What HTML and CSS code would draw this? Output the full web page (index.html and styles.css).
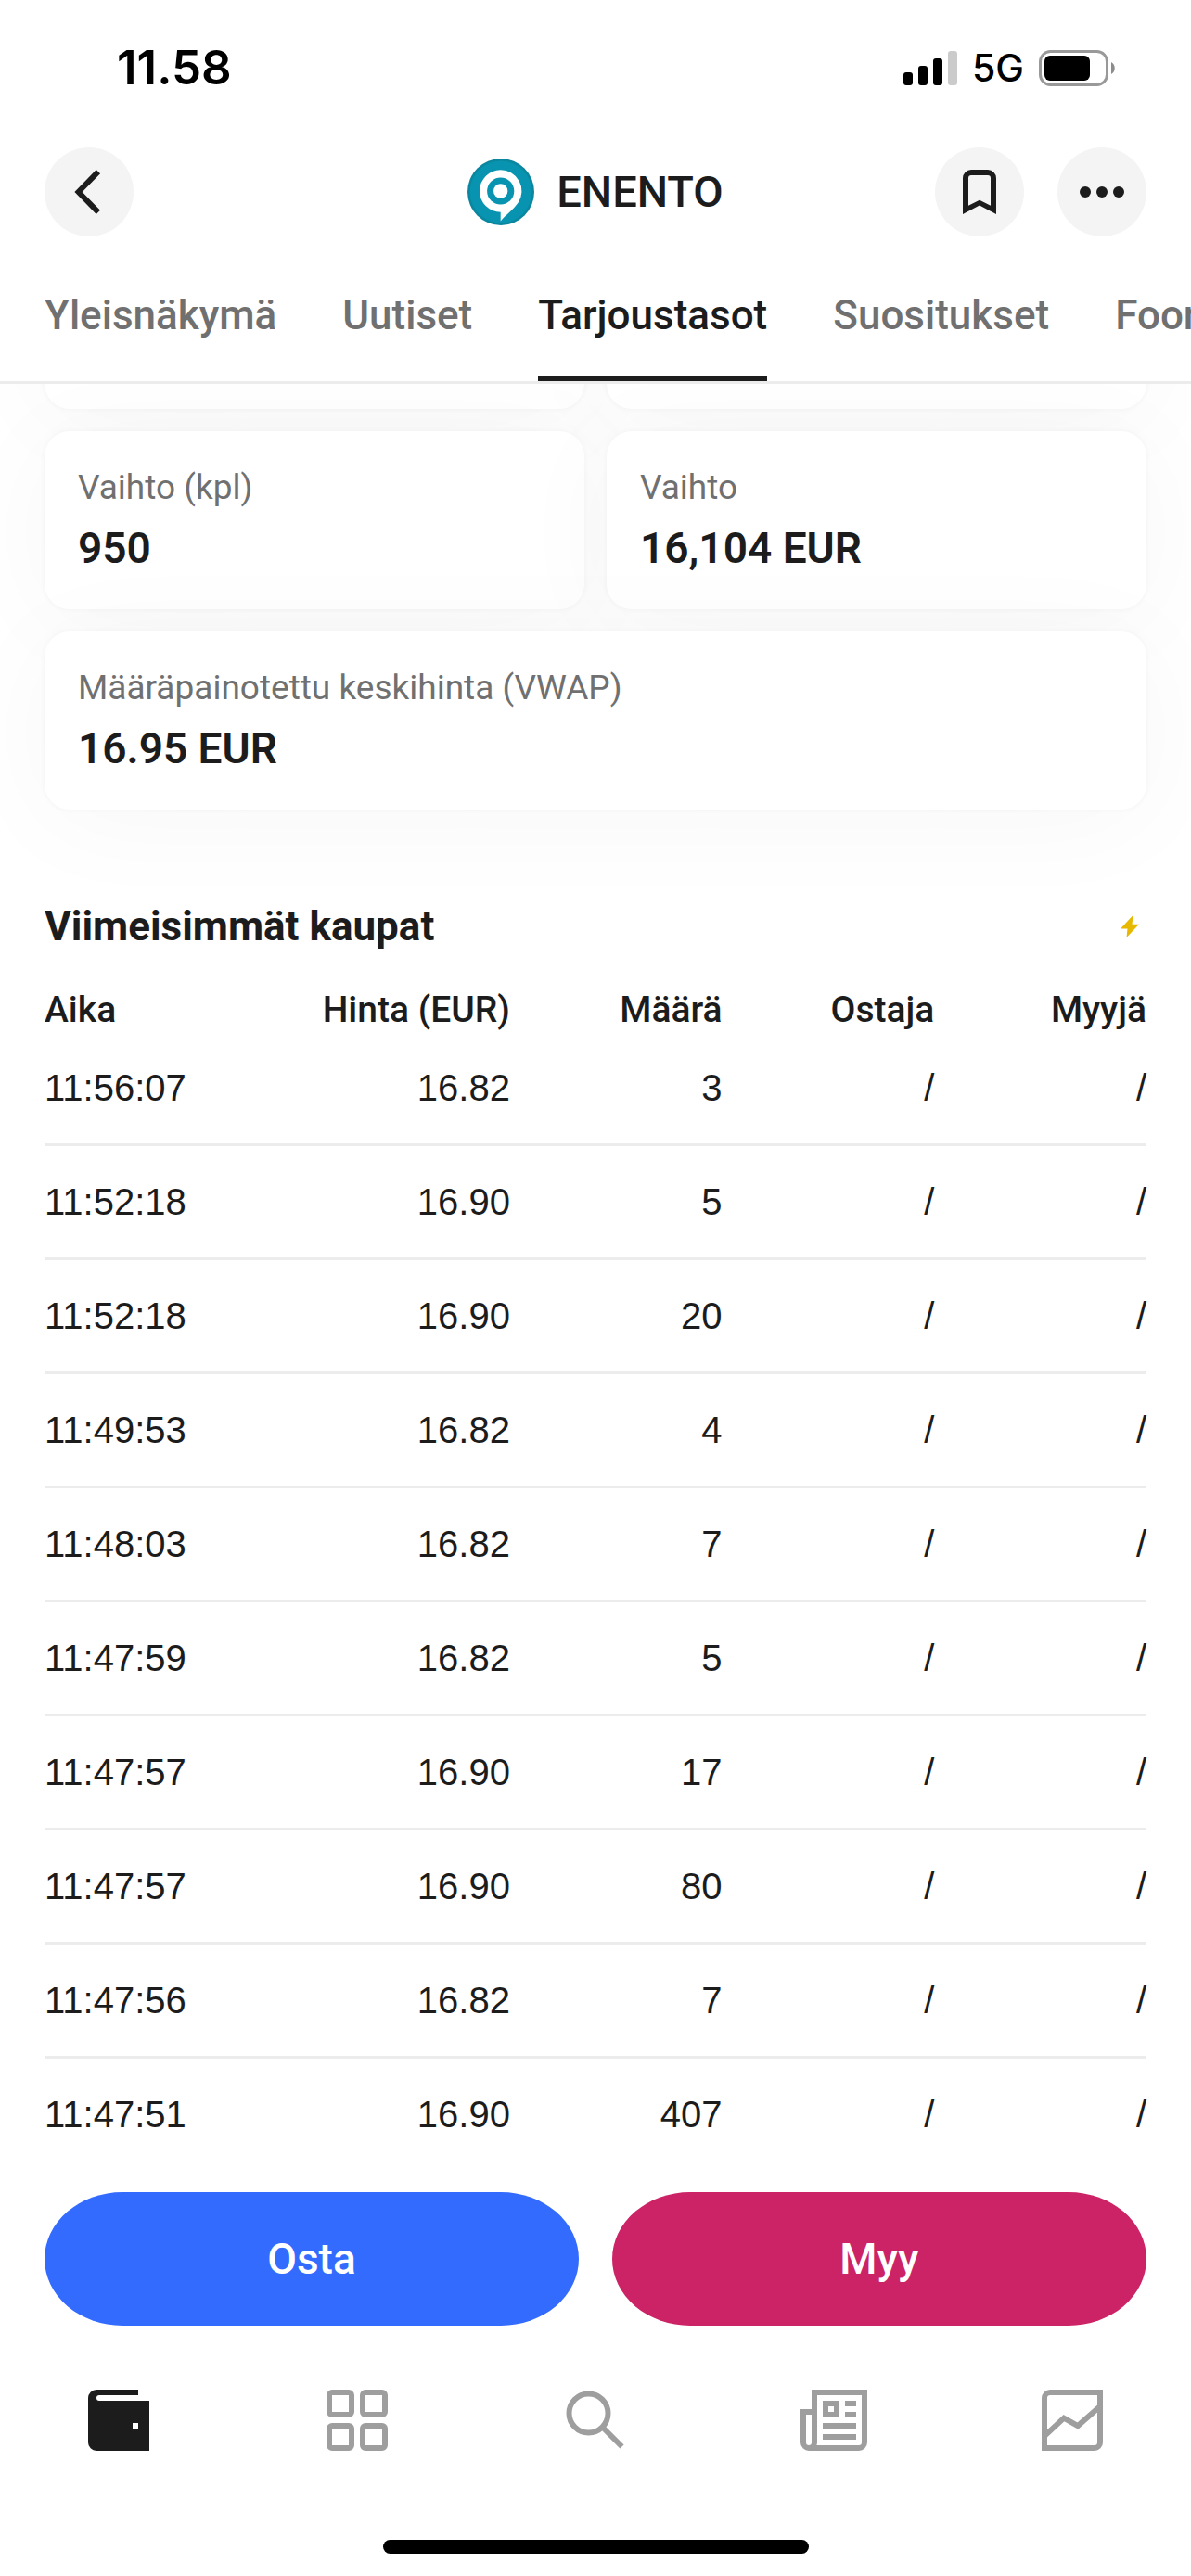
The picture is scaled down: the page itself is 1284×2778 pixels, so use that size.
FILE: index.html
```html
<!DOCTYPE html>
<html lang="fi">
<head>
<meta charset="utf-8">
<meta name="viewport" content="width=device-width, initial-scale=1">
<title>ENENTO</title>
<link rel="stylesheet" href="styles.css">
</head>
<body>
<div class="screen">
  <div class="status-bar">
    <span class="status-time">11.58</span>
    <div class="status-icons">
      <svg class="signal" viewBox="0 0 58 38" aria-hidden="true">
        <rect x="0" y="24" width="10" height="14" rx="3"/>
        <rect x="16" y="17" width="10" height="21" rx="3"/>
        <rect x="32" y="9" width="10" height="29" rx="3"/>
        <rect x="48" y="1" width="10" height="37" rx="3" fill="#cbcbcb"/>
      </svg>
      <span class="network">5G</span>
      <svg class="battery" viewBox="0 0 83 39" aria-hidden="true">
        <rect x="1.5" y="1.5" width="72" height="36" rx="11" fill="none" stroke="#999" stroke-width="3"/>
        <rect x="6" y="6" width="49" height="27" rx="6"/>
        <path d="M78 13c5 2.500 5 10.500 0 13z" fill="#8c8c8c"/>
      </svg>
    </div>
  </div>

  <header class="top-bar">
    <button class="round-button" type="button" aria-label="Takaisin">
      <svg viewBox="0 0 24 24"><path d="M15.300 4.700 8.200 12l7.100 7.300" fill="none" stroke="currentColor" stroke-width="2"/></svg>
    </button>
    <h1 class="company">
      <svg class="company-logo" viewBox="0 0 72 72" aria-hidden="true">
        <circle cx="36" cy="36" r="36" fill="#0a869e"/>
        <circle cx="36" cy="36" r="33.500" fill="#0894b0"/>
        <path fill="#fff" d="M35.700 12.300a22.700 22.700 0 0 1 19 35.200C50 54.500 41 61 35.700 67.500V57.700a22.700 22.700 0 0 1 0-45.400z"/>
        <circle cx="35.700" cy="35" r="14.600" fill="#0894b0"/>
        <circle cx="35.700" cy="35" r="7.700" fill="#fff"/>
      </svg>
      ENENTO
    </h1>
    <div class="top-actions">
      <button class="round-button" type="button" aria-label="Lisää seurantaan">
        <svg viewBox="0 0 24 24"><path fill="currentColor" fill-rule="evenodd" d="M9 4h6a3 3 0 0 1 3 3v13l-6-3.200L6 20V7a3 3 0 0 1 3-3zm0 2a1 1 0 0 0-1 1v9.900l4-2 4 2V7a1 1 0 0 0-1-1z"/></svg>
      </button>
      <button class="round-button" type="button" aria-label="Lisää toimintoja">
        <svg viewBox="0 0 24 24" fill="currentColor"><circle cx="6" cy="12" r="2"/><circle cx="12" cy="12" r="2"/><circle cx="18" cy="12" r="2"/></svg>
      </button>
    </div>
  </header>

  <nav class="tabs">
    <a class="tab" href="#">Yleisnäkymä</a>
    <a class="tab" href="#">Uutiset</a>
    <a class="tab tab-active" href="#" aria-current="page">Tarjoustasot</a>
    <a class="tab" href="#">Suositukset</a>
    <a class="tab" href="#">Foorumi</a>
  </nav>

  <main class="content">
    <div class="stats">
      <div class="stat-card"></div>
      <div class="stat-card"></div>
      <div class="stat-card"><span class="stat-label">Vaihto (kpl)</span><strong class="stat-value">950</strong></div>
      <div class="stat-card"><span class="stat-label">Vaihto</span><strong class="stat-value">16,104 EUR</strong></div>
      <div class="stat-card stat-card-wide"><span class="stat-label">Määräpainotettu keskihinta (VWAP)</span><strong class="stat-value">16.95 EUR</strong></div>
    </div>

    <section class="trades">
      <div class="section-head">
        <h2 class="section-title">Viimeisimmät kaupat</h2>
        <svg class="bolt" viewBox="0 0 36 36" aria-hidden="true"><path fill="#e6b800" d="M21.500 6 8 20.500h7.500L14.500 30 28 15.800h-7.500z"/></svg>
      </div>
      <table class="trade-table">
        <thead>
          <tr><th class="col-time">Aika</th><th>Hinta (EUR)</th><th>Määrä</th><th>Ostaja</th><th>Myyjä</th></tr>
        </thead>
        <tbody>
          <tr><td>11:56:07</td><td>16.82</td><td>3</td><td>/</td><td>/</td></tr>
          <tr><td>11:52:18</td><td>16.90</td><td>5</td><td>/</td><td>/</td></tr>
          <tr><td>11:52:18</td><td>16.90</td><td>20</td><td>/</td><td>/</td></tr>
          <tr><td>11:49:53</td><td>16.82</td><td>4</td><td>/</td><td>/</td></tr>
          <tr><td>11:48:03</td><td>16.82</td><td>7</td><td>/</td><td>/</td></tr>
          <tr><td>11:47:59</td><td>16.82</td><td>5</td><td>/</td><td>/</td></tr>
          <tr><td>11:47:57</td><td>16.90</td><td>17</td><td>/</td><td>/</td></tr>
          <tr><td>11:47:57</td><td>16.90</td><td>80</td><td>/</td><td>/</td></tr>
          <tr><td>11:47:56</td><td>16.82</td><td>7</td><td>/</td><td>/</td></tr>
          <tr><td>11:47:51</td><td>16.90</td><td>407</td><td>/</td><td>/</td></tr>
        </tbody>
      </table>
    </section>
  </main>

  <footer class="bottom">
    <div class="trade-actions">
      <button class="trade-button buy" type="button">Osta</button>
      <button class="trade-button sell" type="button">Myy</button>
    </div>
    <nav class="tab-bar">
      <a class="bar-item bar-item-active" href="#" aria-label="Salkku">
        <svg viewBox="0 0 24 24"><path fill="currentColor" fill-rule="evenodd" d="M4 1h15v2H5a1 1 0 0 0 0 2h18v18H4a3 3 0 0 1-3-3V4a3 3 0 0 1 3-3zm13 12v2h2v-2z"/></svg>
      </a>
      <a class="bar-item" href="#" aria-label="Yleiskatsaus">
        <svg viewBox="0 0 24 24"><path fill="currentColor" fill-rule="evenodd" d="M3 1h6a2 2 0 0 1 2 2v6a2 2 0 0 1-2 2H3a2 2 0 0 1-2-2V3a2 2 0 0 1 2-2zm0 2v6h6V3zM15 1h6a2 2 0 0 1 2 2v6a2 2 0 0 1-2 2h-6a2 2 0 0 1-2-2V3a2 2 0 0 1 2-2zm0 2v6h6V3zM3 13h6a2 2 0 0 1 2 2v6a2 2 0 0 1-2 2H3a2 2 0 0 1-2-2v-6a2 2 0 0 1 2-2zm0 2v6h6v-6zM15 13h6a2 2 0 0 1 2 2v6a2 2 0 0 1-2 2h-6a2 2 0 0 1-2-2v-6a2 2 0 0 1 2-2zm0 2v6h6v-6z"/></svg>
      </a>
      <a class="bar-item" href="#" aria-label="Haku">
        <svg viewBox="0 0 24 24" fill="none" stroke="currentColor" stroke-width="2"><circle cx="9.500" cy="9.500" r="7"/><path d="M14.500 14.500l7 7"/></svg>
      </a>
      <a class="bar-item" href="#" aria-label="Uutiset">
        <svg viewBox="0 0 24 24"><path fill="currentColor" fill-rule="evenodd" d="M4 1h20v19a3 3 0 0 1-3 3H3a3 3 0 0 1-3-3V8h4zm2 2v17a3 3 0 0 1-.2 1H21a1 1 0 0 0 1-1V3zM2 10v10a1 1 0 0 0 2 0V10zM8 5h6v6H8zm2 2v2h2V7zM16 5h4v2h-4zM16 9h4v2h-4zM8 13h12v2H8zM8 17h12v2H8z"/></svg>
      </a>
      <a class="bar-item" href="#" aria-label="Markkinat">
        <svg viewBox="0 0 24 24" fill="none" stroke="currentColor" stroke-width="2"><path d="M2 22V4a2 2 0 0 1 2-2h18v18a2 2 0 0 1-2 2z"/><path d="M2 17.700 9 11.200l5 2.800 8-7"/></svg>
      </a>
    </nav>
    <div class="home-indicator"></div>
  </footer>
</div>
</body>
</html>
```
FILE: styles.css
```css
* {
  box-sizing: border-box;
}

body {
  margin: 0;
  background: #fff;
  color: #1c1c1c;
  font-family: Roboto, "Liberation Sans", sans-serif;
}

a {
  color: inherit;
  text-decoration: none;
}

button {
  border: 0;
  padding: 0;
  color: inherit;
  font: inherit;
  cursor: pointer;
}

.screen {
  display: flex;
  flex-direction: column;
  min-height: 100vh;
}

/* Status bar */

.status-bar {
  display: flex;
  justify-content: space-between;
  align-items: center;
  padding: 43px 81px 0 126px;
  color: #000;
  font-family: Inter, sans-serif;
}

.status-time {
  font-size: 51px;
  font-weight: 600;
  line-height: 60px;
}

.status-icons {
  display: flex;
  align-items: center;
  gap: 16px;
}

.signal {
  width: 58px;
  height: 38px;
}

.network {
  font-size: 41px;
  font-weight: 500;
  line-height: 60px;
}

.battery {
  width: 83px;
  height: 39px;
}

/* Company bar */

.top-bar {
  display: grid;
  grid-template-columns: 1fr auto 1fr;
  align-items: center;
  padding: 56px 48px 0;
}

.round-button {
  display: flex;
  align-items: center;
  justify-content: center;
  width: 96px;
  height: 96px;
  border-radius: 50%;
  background: #f4f4f4;
}

.round-button svg {
  width: 72px;
  height: 72px;
}

.company {
  display: flex;
  align-items: center;
  gap: 24px;
  margin: 0;
  font-size: 47px;
  font-weight: 500;
  line-height: 60px;
}

.company-logo {
  width: 72px;
  height: 72px;
}

.top-actions {
  display: flex;
  justify-content: flex-end;
  gap: 36px;
}

/* Section tabs */

.tabs {
  display: flex;
  gap: 71px;
  padding: 55px 0 0 48px;
  border-bottom: 3px solid #ececec;
  overflow: hidden;
}

.tab {
  flex: none;
  padding-bottom: 35px;
  border-bottom: 6px solid transparent;
  color: #707070;
  font-size: 44px;
  font-weight: 500;
  line-height: 60px;
}

.tab-active {
  border-color: #1c1c1c;
  color: #1c1c1c;
}

/* Key figures */

.content {
  padding: 0 48px;
  overflow: hidden;
}

.stats {
  display: grid;
  grid-template-columns: 1fr 1fr;
  gap: 24px;
  margin-top: -165px;
}

.stat-card {
  display: flex;
  flex-direction: column;
  gap: 11px;
  min-height: 192px;
  padding: 37px 36px 36px;
  border-radius: 27px;
  background: #fff;
  box-shadow: 0 0 6px rgba(0, 0, 0, 0.04), 0 12px 120px rgba(0, 0, 0, 0.034);
}

.stat-card-wide {
  grid-column: 1 / -1;
}

.stat-label {
  color: #707070;
  font-size: 37px;
  line-height: 48px;
}

.stat-value {
  font-size: 46px;
  font-weight: 600;
  line-height: 60px;
}

/* Latest trades */

.section-head {
  display: flex;
  align-items: center;
  justify-content: space-between;
  margin-top: 96px;
}

.section-title {
  margin: 0;
  font-size: 44px;
  font-weight: 700;
  line-height: 60px;
}

.bolt {
  width: 36px;
  height: 36px;
}

.trade-table {
  width: 100%;
  margin-top: 36px;
  border-collapse: collapse;
  table-layout: fixed;
  text-align: right;
}

.trade-table th {
  padding: 0;
  font-size: 39px;
  font-weight: 500;
  line-height: 48px;
}

.trade-table .col-time {
  width: 23%;
}

.trade-table td {
  padding: 36px 0;
  border-bottom: 3px solid #ececec;
  font-family: "Liberation Sans", sans-serif;
  font-size: 40px;
  line-height: 48px;
}

.trade-table th:first-child,
.trade-table td:first-child {
  text-align: left;
}

.trade-table tr:last-child td {
  border-bottom: 0;
}

/* Bottom actions and navigation */

.bottom {
  position: sticky;
  bottom: 0;
  margin-top: auto;
  background: #fff;
}

.trade-actions {
  display: grid;
  grid-template-columns: 1fr 1fr;
  gap: 36px;
  padding: 24px 48px 0;
}

.trade-button {
  height: 144px;
  border-radius: 84px / 72px;
  color: #fff;
  font-size: 46px;
  font-weight: 500;
  line-height: 60px;
}

.buy {
  background: #336bff;
}

.sell {
  background: #cc2266;
}

.tab-bar {
  display: grid;
  grid-template-columns: repeat(5, 1fr);
  padding-top: 66px;
}

.bar-item {
  display: flex;
  justify-content: center;
  color: #9e9e9e;
}

.bar-item-active {
  color: #1c1c1c;
}

.bar-item svg {
  width: 72px;
  height: 72px;
}

.home-indicator {
  width: 459px;
  max-width: 60%;
  height: 15px;
  margin: 93px auto 24px;
  border-radius: 8px;
  background: #000;
}
```
